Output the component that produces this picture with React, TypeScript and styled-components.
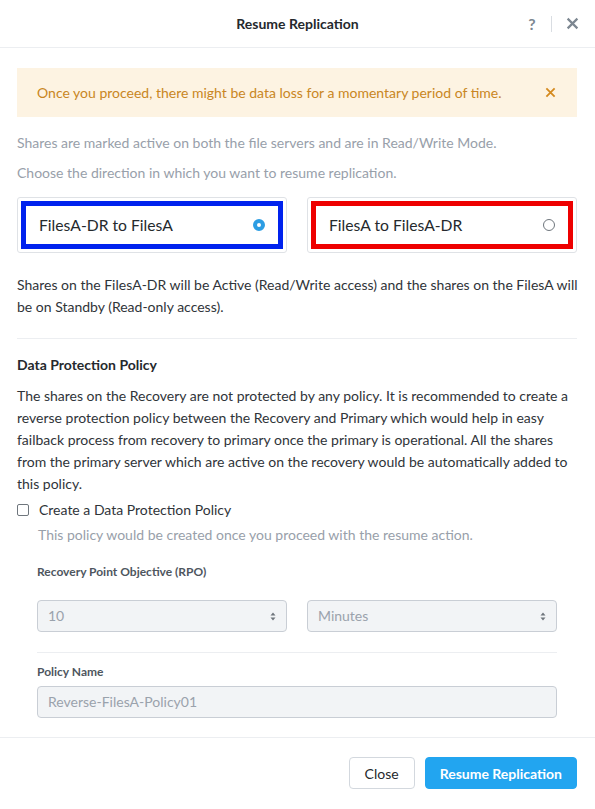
import React from "react"
import styled, { createGlobalStyle } from "styled-components"

const Global = createGlobalStyle`
	body {
		margin: 0;
		background: #fff;
		font-family: Lato, "Open Sans", sans-serif;
		color: #2f3439;
	}
`

const Modal = styled.div`
	width: 595px;
	min-height: 809px;
	display: flex;
	flex-direction: column;
	background: #fff;
`

const Header = styled.div`
	height: 47px;
	border-bottom: 1px solid #eceef1;
	display: flex;
	align-items: center;
	justify-content: center;
	position: relative;
`

const Title = styled.div`
	font-size: 14px;
	font-weight: 700;
	color: #25292d;
`

const HeaderTools = styled.div`
	position: absolute;
	right: 12px;
	top: 0;
	height: 47px;
	display: flex;
	align-items: center;
`

const ToolBtn = styled.span`
	color: #7d8791;
	font-size: 16px;
	font-weight: 700;
	width: 22px;
	display: flex;
	justify-content: center;
`

const ToolSep = styled.span`
	width: 1px;
	height: 16px;
	background: #d9dde2;
	margin: 0 9px 0 8px;
`

const Body = styled.div`
	padding: 20px 18px 19px 17px;
	font-size: 14px;
	line-height: 22px;
`

const Alert = styled.div`
	height: 49px;
	background: #fdf3e2;
	display: flex;
	align-items: center;
	justify-content: space-between;
	padding: 0 21px 0 20px;
	color: #c98623;
	font-size: 14px;
	margin-bottom: 15px;
`

const Muted = styled.div<{ $mb?: number; $mt?: number; $indent?: boolean }>`
	color: #98a0aa;
	margin: ${p => p.$mt ?? 0}px 0 ${p => p.$mb ?? 0}px;
	padding-left: ${p => (p.$indent ? 21 : 0)}px;
`

const Cards = styled.div`
	display: grid;
	grid-template-columns: 1fr 1fr;
	gap: 20px;
	margin-bottom: 21px;
`

const Card = styled.div<{ $frame: string }>`
	height: 56px;
	border: 1px solid #dfe2e6;
	border-radius: 3px;
	padding: 3px;
	box-sizing: border-box;

	> div {
		height: 100%;
		box-sizing: border-box;
		border: 5px solid ${p => p.$frame};
		display: flex;
		align-items: center;
		justify-content: space-between;
		padding: 0 13px 0 13px;
		font-size: 15.7px;
		color: #25292d;
	}
`

const Radio = styled.span<{ $on?: boolean }>`
	width: 12px;
	height: 12px;
	border-radius: 50%;
	box-sizing: border-box;
	border: ${p => (p.$on ? "4px solid #2c9de3" : "1px solid #6f767d")};
	background: #fff;
`

const Text = styled.div<{ $mb?: number; $wide?: boolean }>`
	color: #2f3439;
	margin: 0 ${p => (p.$wide ? -8 : 0)}px ${p => p.$mb ?? 0}px 0;
`

const Rule = styled.div<{ $mb: number }>`
	height: 1px;
	background: #eceef1;
	margin-bottom: ${p => p.$mb}px;
`

const SectionTitle = styled.div`
	font-weight: 700;
	color: #25292d;
	margin-bottom: 9px;
`

const CheckRow = styled.label`
	display: flex;
	align-items: center;
	gap: 10px;
	margin-top: 4px;
	color: #2f3439;
`

const Check = styled.span`
	width: 12px;
	height: 12px;
	border: 1px solid #6f767d;
	border-radius: 2px;
	box-sizing: border-box;
`

const Nested = styled.div`
	padding: 0 20px;
`

const FieldLabel = styled.div<{ $mt: number; $mb: number }>`
	font-size: 12px;
	line-height: 16px;
	font-weight: 700;
	color: #4e565e;
	margin: ${p => p.$mt}px 0 ${p => p.$mb}px;
`

const SelectRow = styled.div`
	display: grid;
	grid-template-columns: 1fr 1fr;
	gap: 20px;
	margin-bottom: 20px;
`

const Field = styled.div`
	height: 32px;
	box-sizing: border-box;
	background: #f2f4f6;
	border: 1px solid #c9ced5;
	border-radius: 4px;
	display: flex;
	align-items: center;
	justify-content: space-between;
	padding: 0 10px;
	color: #9aa2ac;
	font-size: 14px;
`

const Footer = styled.div`
	border-top: 1px solid #eceef1;
	padding: 19px 18px 0;
	display: flex;
	justify-content: flex-end;
	gap: 10px;
`

const Button = styled.button<{ $primary?: boolean }>`
	height: 32px;
	box-sizing: border-box;
	border-radius: 4px;
	font-family: inherit;
	font-size: 14px;
	padding: 0 ${p => (p.$primary ? 14 : 15)}px;
	border: 1px solid ${p => (p.$primary ? "#22a5f0" : "#d3d8de")};
	background: ${p => (p.$primary ? "#22a5f0" : "#fff")};
	color: ${p => (p.$primary ? "#fff" : "#25292d")};
	font-weight: ${p => (p.$primary ? 700 : 400)};
`

const Arrows = () => (
	<svg width="6" height="9" viewBox="0 0 6 9">
		<path d="M3 0.5 L5.5 3.5 H0.5 Z M3 8.5 L5.5 5.5 H0.5 Z" fill="#6f767d" />
	</svg>
)

const Cross = ({ c, s }: { c: string; s: number }) => (
	<svg width={s} height={s} viewBox="0 0 12 12">
		<path d="M1.5 1.5 L10.5 10.5 M10.5 1.5 L1.5 10.5" stroke={c} strokeWidth="2" />
	</svg>
)

const App = () => {
	return (
		<Modal>
			<Global />
			<Header>
				<Title>Resume Replication</Title>
				<HeaderTools>
					<ToolBtn>?</ToolBtn>
					<ToolSep />
					<ToolBtn>
						<Cross c="#7d8791" s={13} />
					</ToolBtn>
				</HeaderTools>
			</Header>
			<Body>
				<Alert>
					<span>Once you proceed, there might be data loss for a momentary period of time.</span>
					<Cross c="#d48a1f" s={11} />
				</Alert>
				<Muted $mb={8}>Shares are marked active on both the file servers and are in Read/Write Mode.</Muted>
				<Muted $mb={13}>Choose the direction in which you want to resume replication.</Muted>
				<Cards>
					<Card $frame="#0022ee">
						<div>
							FilesA-DR to FilesA
							<Radio $on />
						</div>
					</Card>
					<Card $frame="#ee0000">
						<div>
							FilesA to FilesA-DR
							<Radio />
						</div>
					</Card>
				</Cards>
				<Text $mb={20} $wide>
					Shares on the FilesA-DR will be Active (Read/Write access) and the shares on the FilesA will be on Standby (Read-only access).
				</Text>
				<Rule $mb={15} />
				<SectionTitle>Data Protection Policy</SectionTitle>
				<Text>
					The shares on the Recovery are not protected by any policy. It is recommended to create a reverse protection policy between the Recovery and Primary which would help in easy failback process from recovery to primary once the primary is operational. All the shares from the primary server which are active on the recovery would be automatically added to this policy.
				</Text>
				<CheckRow>
					<Check />
					Create a Data Protection Policy
				</CheckRow>
				<Muted $indent $mt={3}>This policy would be created once you proceed with the resume action.</Muted>
				<Nested>
					<FieldLabel $mt={18} $mb={20}>Recovery Point Objective (RPO)</FieldLabel>
					<SelectRow>
						<Field>
							10
							<Arrows />
						</Field>
						<Field>
							Minutes
							<Arrows />
						</Field>
					</SelectRow>
					<Rule $mb={11} />
					<FieldLabel $mt={0} $mb={6}>Policy Name</FieldLabel>
					<Field>Reverse-FilesA-Policy01</Field>
				</Nested>
			</Body>
			<Footer>
				<Button>Close</Button>
				<Button $primary>Resume Replication</Button>
			</Footer>
		</Modal>
	)
}

export default App
